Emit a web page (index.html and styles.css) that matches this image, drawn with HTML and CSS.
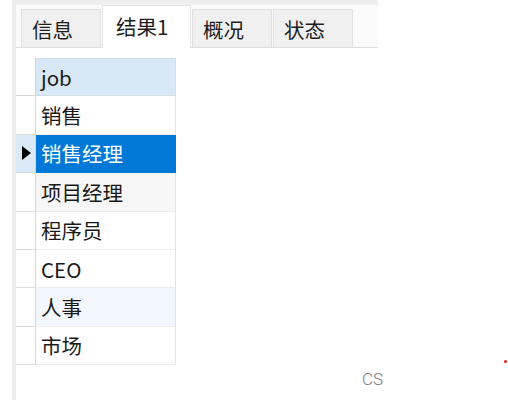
FILE: index.html
```html
<!DOCTYPE html>
<html>
<head>
<meta charset="utf-8">
<link rel="stylesheet" href="styles.css">
</head>
<body>
<div class="page">
  <div class="lstrip"></div>
  <div class="main">
    <div class="topbar"></div>
    <div class="tabbar">
      <div class="tab">信息</div>
      <div class="tab active">结果1</div>
      <div class="tab">概况</div>
      <div class="tab">状态</div>
    </div>
    <div class="grid">
      <div class="ind hdr-ind"></div><div class="cell hdr">job</div>
      <div class="ind"></div><div class="cell">销售</div>
      <div class="ind sel-ind"><span class="tri"></span></div><div class="cell sel">销售经理</div>
      <div class="ind"></div><div class="cell alt-gray">项目经理</div>
      <div class="ind"></div><div class="cell">程序员</div>
      <div class="ind"></div><div class="cell">CEO</div>
      <div class="ind"></div><div class="cell alt-blue">人事</div>
      <div class="ind"></div><div class="cell">市场</div>
    </div>
    <span class="wm">CS</span>
  </div>
  <span class="dot"></span>
</div>
</body>
</html>
```

FILE: styles.css
```css
html, body {
  margin: 0;
  padding: 0;
  background: #ffffff;
}
.page {
  position: relative;
  width: 508px;
  height: 400px;
  display: flex;
  overflow: hidden;
  font-family: "Noto Sans CJK SC", "Noto Sans", sans-serif;
  color: #1a1a1a;
}
.lstrip {
  width: 4px;
  margin-left: 12px;
  height: 400px;
  background: #ededed;
}
.main {
  position: relative;
  width: 362px;
  height: 400px;
  display: flex;
  flex-direction: column;
}
.topbar {
  height: 5px;
  background: #efefef;
  flex: none;
}
.tabbar {
  height: 42px;
  flex: none;
  display: flex;
  align-items: flex-end;
  padding-left: 5px;
  background: #fbfbfb;
  border-bottom: 1px solid #dedede;
}
.tab {
  box-sizing: border-box;
  width: 80px;
  height: 38px;
  margin-right: 1px;
  background: #f0f0f0;
  border: 1px solid #e0e0e0;
  border-bottom: none;
  font-size: 20.5px;
  line-height: 38px;
  padding-left: 10px;
  color: #1e1e1e;
}
.tab.active {
  width: 89px;
  height: 43px;
  margin-bottom: -1px;
  background: #ffffff;
  border-color: #e6e6e6;
  line-height: 40px;
  padding-left: 13px;
}
.grid {
  margin-top: 10px;
  display: grid;
  grid-template-columns: 20px 140px;
  grid-template-rows: repeat(8, 38.4px);
}
.ind {
  box-sizing: border-box;
  border-right: 1px solid #d6d6d6;
  border-bottom: 1px solid #dcdcdc;
  background: #ffffff;
  display: flex;
  align-items: center;
  justify-content: center;
}
.hdr-ind {
  border-bottom: 1px solid #d6d6d6;
}
.sel-ind {
  background: #dbe9f7;
}
.tri {
  width: 0;
  height: 0;
  border-top: 7px solid transparent;
  border-bottom: 7px solid transparent;
  border-left: 9px solid #000000;
  margin-left: 2px;
}
.cell {
  box-sizing: border-box;
  font-size: 20.5px;
  padding-left: 5px;
  display: flex;
  align-items: center;
  border-right: 1px solid #e4e4e4;
  border-bottom: 1px solid #ececec;
  background: #ffffff;
  color: #1a1a1a;
}
.cell.hdr {
  background: #d9e8f7;
  border: 1px solid #d4dce4;
  border-left: none;
}
.cell.sel {
  background: #0078d7;
  color: #ffffff;
  border-color: #0078d7;
}
.cell.alt-gray {
  background: #f7f7f7;
}
.cell.alt-blue {
  background: #f1f7fd;
}
.wm {
  position: absolute;
  left: 346px;
  top: 369px;
  font-family: "Roboto", sans-serif;
  font-weight: 300;
  font-size: 17px;
  color: #7a7a7a;
}
.dot {
  position: absolute;
  left: 504px;
  top: 360px;
  width: 3px;
  height: 3px;
  border-radius: 50%;
  background: #e8191a;
}
```
